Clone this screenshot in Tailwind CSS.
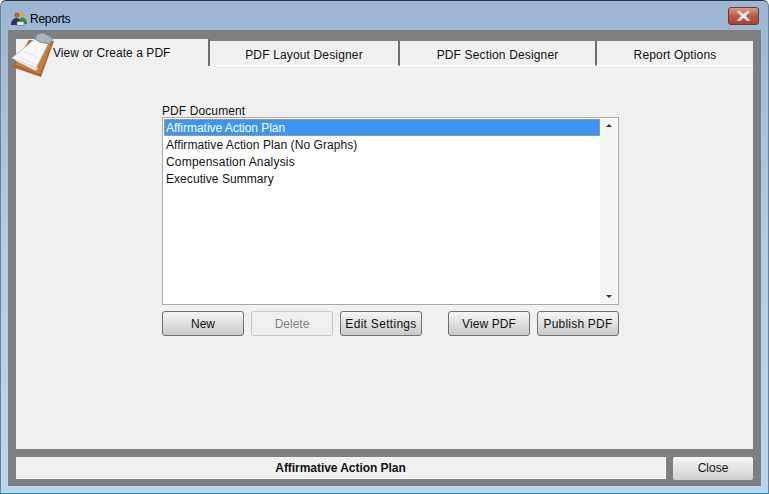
<!DOCTYPE html>
<html lang="en">
<head>
    <meta charset="UTF-8" />
    <title>Reports</title>
    <script src="https://cdn.jsdelivr.net/npm/@tailwindcss/browser@4"></script>
</head>
<body class="w-[769px] h-[494px] overflow-hidden bg-white font-['Liberation_Sans',Arial,sans-serif] text-[12px] text-[#111]">
    <!-- window -->
    <div class="relative w-full h-full flex flex-col rounded-t-[6px] border border-[#2b3640] border-x-[#6d8095] border-b-[#1c8fa8] bg-gradient-to-b from-[#9db6d2] via-[#b4cce6] to-[#bdd6ef]">
        <!-- title bar -->
        <div class="h-[29px] shrink-0 flex items-center pl-[10px] pr-[9px] pt-[6px]">
            <svg class="w-[16px] h-[16px] mr-[3px]" viewBox="0 0 16 16">
                <circle cx="6" cy="4" r="2.6" fill="#a8662a" />
                <circle cx="11" cy="3.500" r="2.4" fill="#d9a441" />
                <path d="M8 13c0-4 1-6.500 3.500-6.500S16 9 16 13z" fill="#3f8a3a" />
                <path d="M0 14c0-4 2-7 5.500-7S10 10 10 14z" fill="#25365c" />
                <rect x="6" y="10.500" width="7" height="4" fill="#e4e4e4" stroke="#555" stroke-width=".5" />
            </svg>
            <span class="text-[12px] text-black tracking-[-0.25px]">Reports</span>
            <button class="ml-auto mt-[-5px] w-[31px] h-[18px] flex items-center justify-center rounded-[3px] border border-[#6b3a34] bg-gradient-to-b from-[#d79a8a] via-[#bf5a45] to-[#a8432f]">
                <svg class="w-[13px] h-[10px]" viewBox="0 0 13 10">
                    <path d="M2 1l9 8M11 1l-9 8" stroke="#ececec" stroke-width="2.800" stroke-linecap="square" />
                </svg>
            </button>
        </div>

        <!-- client area -->
        <div class="flex-1 mx-[7px] mb-[8px] bg-[#7f7f7f] px-[8px] pt-[9px] pb-[6px] flex flex-col">
            <!-- tabs -->
            <div class="h-[27px] shrink-0 flex items-end text-[#111]">
                <div class="w-[194px] h-[27px] bg-[#f0f0f0] border-r-2 border-[#6e6e6e] pl-[37px] pt-[5px] tracking-[0.05px]">View or Create a PDF</div>
                <div class="w-[190px] h-[25px] bg-[#f0f0f0] border-r-2 border-[#6e6e6e] border-b border-b-white text-center pt-[5px] tracking-[0.15px]">PDF Layout Designer</div>
                <div class="w-[197px] h-[25px] bg-[#f0f0f0] border-r-2 border-[#6e6e6e] border-b border-b-white text-center pt-[5px] tracking-[0.15px]">PDF Section Designer</div>
                <div class="w-[156px] h-[25px] bg-[#f0f0f0] border-b border-b-white text-center pt-[5px] tracking-[0.15px]">Report Options</div>
            </div>

            <!-- tab panel -->
            <div class="h-[383px] shrink-0 bg-[#f0f0f0] pl-[146px] pt-[38px]">
                <div class="w-[457px]">
                    <div class="h-[13px] leading-[15px] tracking-[0.1px]">PDF Document</div>
                    <!-- list -->
                    <div class="h-[188px] flex border border-[#a9a9a9] bg-white p-[1px]">
                        <ul class="flex-1 leading-[19px]">
                            <li class="h-[17px] pl-[2px] bg-[#3d95f2] text-white outline-1 outline-dotted outline-offset-[-1px] outline-[#e0a050] tracking-[-0.03px]">Affirmative Action Plan</li>
                            <li class="h-[17px] pl-[2px] tracking-[0.06px]">Affirmative Action Plan (No Graphs)</li>
                            <li class="h-[17px] pl-[2px] tracking-[0.2px]">Compensation Analysis</li>
                            <li class="h-[17px] pl-[2px] tracking-[0.06px]">Executive Summary</li>
                        </ul>
                        <div class="w-[17px] bg-[#f4f4f4] flex flex-col justify-between items-center py-[5px]">
                            <div class="w-0 h-0 border-x-[3px] border-x-transparent border-b-[3px] border-b-[#333]"></div>
                            <div class="w-0 h-0 border-x-[3px] border-x-transparent border-t-[3px] border-t-[#333]"></div>
                        </div>
                    </div>
                    <!-- buttons -->
                    <div class="mt-[6px] flex gap-[7px]">
                        <button class="w-[82px] h-[25px] rounded-[3px] border border-[#6f6f6f] bg-gradient-to-b from-[#f7f7f7] to-[#c8c8c8] text-center">New</button>
                        <button class="w-[82px] h-[25px] rounded-[3px] border border-[#c9c9c9] bg-[#f0f0f0] text-[#808080] text-center">Delete</button>
                        <button class="w-[82px] h-[25px] rounded-[3px] border border-[#6f6f6f] bg-gradient-to-b from-[#f7f7f7] to-[#c8c8c8] text-center tracking-[0.3px]">Edit Settings</button>
                        <button class="w-[82px] h-[25px] ml-[19px] rounded-[3px] border border-[#6f6f6f] bg-gradient-to-b from-[#f7f7f7] to-[#c8c8c8] text-center tracking-[0.1px]">View PDF</button>
                        <button class="w-[82px] h-[25px] rounded-[3px] border border-[#6f6f6f] bg-gradient-to-b from-[#f7f7f7] to-[#c8c8c8] text-center tracking-[0.2px]">Publish PDF</button>
                    </div>
                </div>
            </div>

            <!-- status row -->
            <div class="mt-[8px] flex gap-[7px]">
                <div class="w-[650px] h-[22px] bg-[#f0f0f0] border-r border-b border-white text-center font-bold leading-[22px] tracking-[-0.05px]">Affirmative Action Plan</div>
                <button class="w-[80px] h-[23px] rounded-[2px] bg-gradient-to-b from-[#f7f7f7] to-[#cfcfcf] text-center leading-[21px]">Close</button>
            </div>
        </div>

        <!-- clipboard sits over the first tab -->
        <svg class="absolute left-[9px] top-[29px] w-[46px] h-[48px]" viewBox="0 0 46 48">
            <path d="M19 10 L44 11 L31 47 L2 37 Z" fill="#a9662a" />
            <path d="M20 12 L42 12 L30 44 L5 35 Z" fill="#c07f3e" />
            <path d="M25 9 L39 12 L26 38 L2 28 Z" fill="#f7f7f7" stroke="#c6c9cd" stroke-width="1" />
            <path d="M6 31 L26 41 L28 38 L4 28 Z" fill="#dfe2e6" />
            <path d="M9 27 L27 35 M14 21 L30 29" stroke="#e2e4e8" stroke-width="1" />
            <path d="M27 4 L33 3 L43 8 L40 14 L30 12 L25 9 Z" fill="#aab4bd" stroke="#7f8a94" stroke-width="1" />
        </svg>
    </div>
</body>
</html>
